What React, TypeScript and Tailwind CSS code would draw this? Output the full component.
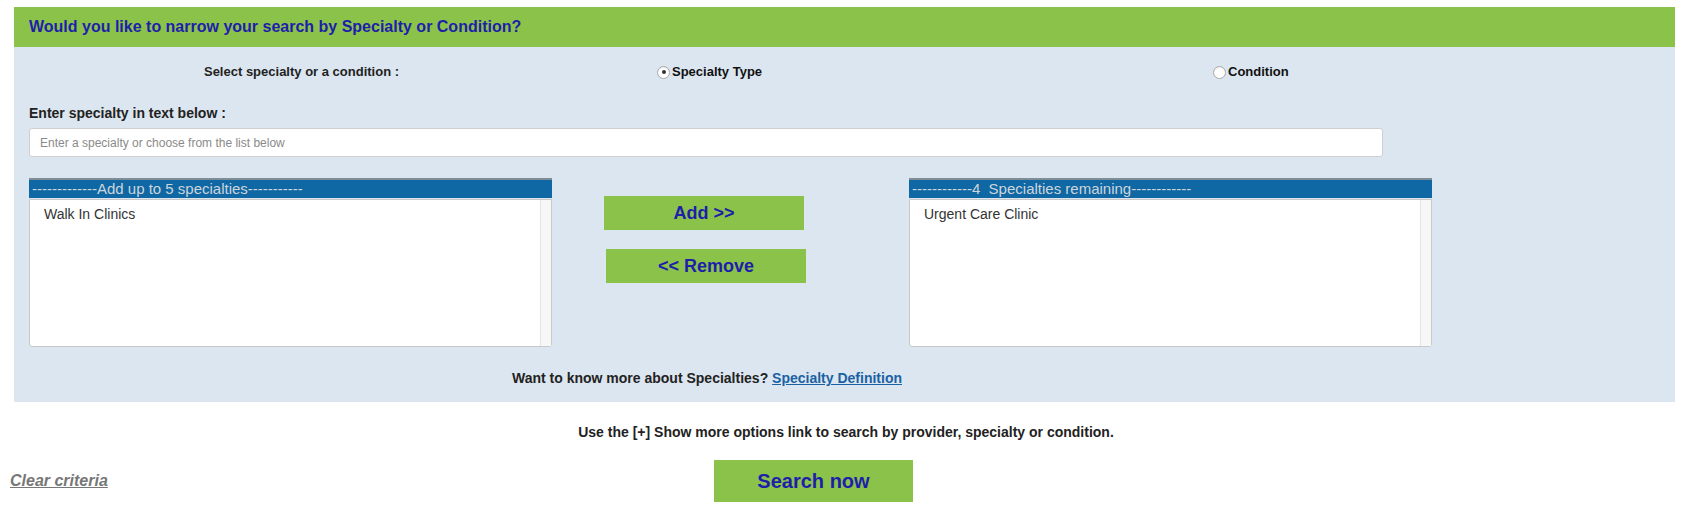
import React from "react";

const font = { fontFamily: '"Liberation Sans", Arial, Helvetica, sans-serif' };

function Radio({ checked }: { checked?: boolean }) {
  return (
    <span className="relative inline-flex h-[13px] w-[13px] shrink-0 items-center justify-center rounded-full border border-[#a9a9a9] bg-white shadow-[inset_0_1px_1px_rgba(0,0,0,0.08)]">
      {checked && <span className="h-[4px] w-[4px] rounded-full bg-[#333]" />}
    </span>
  );
}

function ListBox({ title, items }: { title: string; items: string[] }) {
  return (
    <div className="flex w-[523px] flex-col">
      <div className="h-[20px] overflow-hidden border-t-2 border-[#7f8d99] bg-[#0f67a3] pl-[3px] text-[15px] leading-[18px] text-[#cdd5dc] whitespace-pre">
        {title}
      </div>
      <div className="mt-[1px] flex h-[148px] rounded-b-[3px] border border-[#c8c8c8] bg-white">
        <div className="flex-1 pl-[14px] pt-[6px]">
          {items.map((i) => (
            <div key={i} className="text-[14px] leading-[16px] text-[#333]">
              {i}
            </div>
          ))}
        </div>
        <div className="w-[11px] border-l border-[#e4e4e4] bg-[#f7f7f7]" />
      </div>
    </div>
  );
}

export default function App() {
  return (
    <div className="min-h-[508px] w-[1681px] bg-white" style={font}>
      <div className="ml-[14px] mr-[6px] pt-[7px]">
        <div className="flex h-[40px] items-center bg-[#8bc34a] pl-[15px]">
          <span className="text-[16px] font-bold text-[#1e1eaa]">
            Would you like to narrow your search by Specialty or Condition?
          </span>
        </div>
        <div className="bg-[#dce6f0] px-[15px] pb-[16px] pt-[15px]">
          <div className="flex h-[20px] items-center">
            <div className="w-[545px] text-center text-[13px] font-bold text-[#222]">
              Select specialty or a condition :
            </div>
            <div className="flex w-[639px] items-center gap-[2px] pl-[83px]">
              <Radio checked />
              <span className="text-[13px] font-bold text-[#111]">Specialty Type</span>
            </div>
            <div className="flex items-center gap-[2px]">
              <Radio />
              <span className="text-[13px] font-bold text-[#111]">Condition</span>
            </div>
          </div>
          <div className="mt-[23px] h-[16px] text-[14px] font-bold leading-[16px] text-[#222]">
            Enter specialty in text below :
          </div>
          <div className="mt-[7px] flex h-[29px] w-[1354px] items-center rounded-[3px] border border-[#cfcfcf] bg-white pl-[10px]">
            <span className="text-[12px] text-[#8a8a8a]">Enter a specialty or choose from the list below</span>
          </div>
          <div className="mt-[21px] flex">
            <ListBox title="-------------Add up to 5 specialties-----------" items={["Walk In Clinics"]} />
            <div className="flex w-[357px] flex-col pl-[52px] pt-[18px]">
              <button className="flex h-[34px] w-[200px] items-center justify-center bg-[#8bc34a] text-[18px] font-bold text-[#1e1eaa]">
                Add &gt;&gt;
              </button>
              <button className="ml-[2px] mt-[19px] flex h-[34px] w-[200px] items-center justify-center bg-[#8bc34a] text-[18px] font-bold text-[#1e1eaa]">
                &lt;&lt; Remove
              </button>
            </div>
            <ListBox title="------------4  Specialties remaining------------" items={["Urgent Care Clinic"]} />
          </div>
          <div className="mt-[23px] h-[16px] pl-[483px] text-[14px] font-bold leading-[16px] text-[#222]">
            Want to know more about Specialties?{" "}
            <a className="text-[#1a62a3] underline">Specialty Definition</a>
          </div>
        </div>
      </div>
      <div className="mt-[22px] h-[16px] pl-[11px] text-center text-[14px] font-bold leading-[16px] text-[#222]">
        Use the [+] Show more options link to search by provider, specialty or condition.
      </div>
      <div className="mt-[20px] flex items-center pl-[10px]">
        <a className="w-[704px] text-[16px] font-bold italic text-[#777] underline">Clear criteria</a>
        <button className="flex h-[42px] w-[199px] items-center justify-center bg-[#8bc34a] text-[20px] font-bold text-[#1e1eaa]">
          Search now
        </button>
      </div>
    </div>
  );
}
